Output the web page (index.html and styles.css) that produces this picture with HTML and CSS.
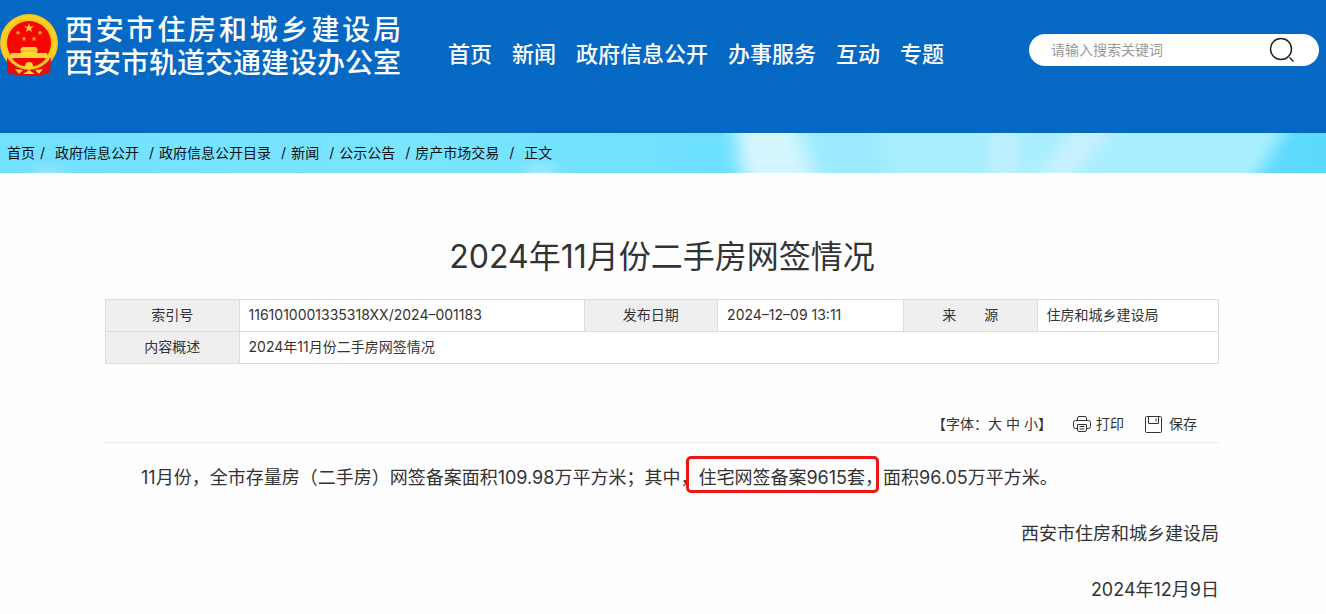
FILE: index.html
```html
<!DOCTYPE html>
<html lang="zh-CN">
<head>
<meta charset="utf-8">
<meta name="viewport" content="width=device-width, initial-scale=1">
<title>2024年11月份二手房网签情况</title>
<link rel="stylesheet" href="styles.css">
</head>
<body>
<header class="header">
  <a class="brand" href="#">
    <svg class="emblem" viewBox="0 0 58 62" aria-hidden="true">
      <path d="M8 43L7 59Q18 62 29 61Q40 62 50 59L50 43Z" fill="#e60d08"/>
      <circle cx="29" cy="29" r="29" fill="#f7c41a"/>
      <circle cx="29" cy="29" r="26" fill="none" stroke="#fbd02c" stroke-width="3"/>
      <circle cx="29" cy="29" r="22" fill="#f50600"/>
      <path d="M7 44L17 45L29 52L41 45L51 44L50 59L39 61L29 58L19 61L7 59Z" fill="#e60d08"/>
      <path d="M29 9l1.200 3.400h3.600l-2.900 2.200 1.100 3.500-3-2.100-3 2.100 1.100-3.500-2.900-2.200h3.600z" fill="#ffc93c"/>
      <path d="M18 16l.7 1.800 1.900.1-1.500 1.200.5 1.900-1.600-1.100-1.600 1.100.5-1.900-1.500-1.200 1.900-.1zM40 16l.7 1.800 1.900.1-1.500 1.200.5 1.900-1.600-1.100-1.600 1.100.5-1.900-1.500-1.200 1.900-.1zM24 22l.7 1.800 1.900.1-1.500 1.200.5 1.900-1.600-1.100-1.600 1.100.5-1.900-1.500-1.200 1.900-.1zM34 22l.7 1.800 1.900.1-1.500 1.200.5 1.900-1.600-1.100-1.600 1.100.5-1.900-1.500-1.200 1.900-.1z" fill="#f99a28"/>
      <path d="M22 33h14l2 3h-1v3h10l1 5H10l1-5h10v-3h-1z" fill="#ffd633"/>
      <path d="M20 37h18" stroke="#f0a51c" fill="none"/>
      <path d="M9 44Q17 53 25 54Q29 49 33 54Q41 53 49 44" fill="none" stroke="#f8c527" stroke-width="3"/>
      <circle cx="29" cy="52" r="4" fill="#ffd633"/>
      <path d="M15 55l8 1-4 4zM43 55l-8 1 4 4zM23 60l6-4 6 4z" fill="#ffd633"/>
    </svg>
    <span class="brand-names">
      <span class="brand-name">西安市住房和城乡建设局</span>
      <span class="brand-name">西安市轨道交通建设办公室</span>
    </span>
  </a>
  <nav class="nav">
    <a href="#">首页</a>
    <a href="#">新闻</a>
    <a href="#">政府信息公开</a>
    <a href="#">办事服务</a>
    <a href="#">互动</a>
    <a href="#">专题</a>
  </nav>
  <form class="search" role="search">
    <input class="search-input" type="text" placeholder="请输入搜索关键词" aria-label="请输入搜索关键词">
    <button class="search-button" type="button" aria-label="搜索">
      <svg width="26" height="26" viewBox="0 0 26 26" fill="none" stroke="#222" stroke-width="1.500" aria-hidden="true">
        <circle cx="12" cy="12" r="10.500"/>
        <path d="M20.500 20.500l4 4"/>
      </svg>
    </button>
  </form>
</header>

<nav class="crumbs" aria-label="当前位置">
  <svg class="crumbs-art" viewBox="0 0 1326 40" preserveAspectRatio="none" aria-hidden="true">
    <defs>
      <filter id="soft" x="-20%" y="-50%" width="140%" height="200%"><feGaussianBlur stdDeviation="9 4"/></filter>
      <linearGradient id="base">
        <stop offset="0" stop-color="#72e0ff"/>
        <stop offset=".3" stop-color="#7ae5ff"/>
        <stop offset=".54" stop-color="#6ee0ff"/>
        <stop offset="1" stop-color="#5cdafe"/>
      </linearGradient>
    </defs>
    <rect width="1326" height="40" fill="url(#base)"/>
    <g filter="url(#soft)">
      <path d="M735 -12H1290L1275 15L1250 55H745L738 30Z" fill="#a8eeff"/>
      <path d="M730 -20H790L815 60H750Z" fill="#d6f6ff"/>
      <path d="M800 -20H870L895 60H830Z" fill="#9beaff"/>
      <path d="M990 -20H1018L1018 60H990Z" fill="#c0f0ff"/>
      <path d="M1085 -20H1125L1060 60H1025Z" fill="#c8f1ff"/>
      <path d="M40 32L58 36L70 50H35Z" fill="#a0e8ff"/>
      <path d="M530 34L545 28L560 50H520Z" fill="#a0eaff"/>
    </g>
  </svg>
  <ol class="crumb-list">
    <li><a href="#">首页</a><span>/</span></li>
    <li><a href="#">政府信息公开</a></li>
    <li><span>/</span><a href="#">政府信息公开目录</a></li>
    <li><span>/</span><a href="#">新闻</a></li>
    <li><span>/</span><a href="#">公示公告</a></li>
    <li><span>/</span><a href="#">房产市场交易</a></li>
    <li><span>/</span></li>
    <li>正文</li>
  </ol>
</nav>

<main class="article">
  <h1 class="title">2024年11月份二手房网签情况</h1>
  <table class="meta">
    <colgroup>
      <col class="col-label"><col class="col-index"><col class="col-label"><col class="col-date"><col class="col-label"><col>
    </colgroup>
    <tr>
      <th scope="row">索引号</th><td>1161010001335318XX/2024–001183</td>
      <th scope="row">发布日期</th><td>2024–12–09 13:11</td>
      <th scope="row">来&emsp;&emsp;源</th><td>住房和城乡建设局</td>
    </tr>
    <tr>
      <th scope="row">内容概述</th><td colspan="5">2024年11月份二手房网签情况</td>
    </tr>
  </table>
  <div class="tools">
    <div class="sizes"><span>【字体：</span><button type="button">大</button><button type="button">中</button><button type="button">小</button><span>】</span></div>
    <button class="tool" type="button">
      <svg width="18" height="16" viewBox="0 0 18 16" fill="none" stroke="#333" aria-hidden="true">
        <path d="M4.500 4V2a1.500 1.500 0 0 1 1.500-1.500h6A1.500 1.500 0 0 1 13.500 2v2M4 12.500H2.500a2 2 0 0 1-2-2V6.500a2 2 0 0 1 2-2h13a2 2 0 0 1 2 2v4a2 2 0 0 1-2 2H14M4.500 8.500h9v5.500a1.500 1.500 0 0 1-1.500 1.500H6A1.500 1.500 0 0 1 4.500 14zM6.500 10.500h5M6.500 13h5"/>
      </svg>打印
    </button>
    <button class="tool save" type="button">
      <svg width="17" height="17" viewBox="0 0 17 17" fill="none" stroke="#333" aria-hidden="true">
        <path d="M1.500.5h14a1 1 0 0 1 1 1v14a1 1 0 0 1-1 1h-14a1 1 0 0 1-1-1v-14a1 1 0 0 1 1-1zM3.500.5v7h10v-7M11 2.500v3"/>
      </svg>保存
    </button>
  </div>
  <div class="content">
    <p class="body-text">11月份，全市存量房（二手房）网签备案面积109.98万平方米；其中，<span class="marked">住宅网签备案9615套，</span>面积96.05万平方米。</p>
    <p class="sign">西安市住房和城乡建设局</p>
    <p class="sign">2024年12月9日</p>
  </div>
</main>
</body>
</html>
```

FILE: styles.css
```css
* {
  box-sizing: border-box;
}

body {
  margin: 0;
  background: #fefefe;
  color: #333;
  font-family: Inter, "Noto Sans CJK SC", sans-serif;
  font-size: 14px;
  line-height: 20px;
}

a {
  color: inherit;
  text-decoration: none;
}

button,
input {
  padding: 0;
  border: 0;
  background: none;
  color: inherit;
  font: inherit;
}

.header {
  display: flex;
  align-items: flex-start;
  min-height: 133px;
  padding: 14px 7px 0 0;
  background: #0568c3;
  color: #fff;
}

.brand {
  display: flex;
  gap: 7px;
  flex: none;
}

.emblem {
  width: 58px;
  height: 62px;
}

.brand-names {
  display: flex;
  flex-direction: column;
  font-size: 28px;
  font-weight: 500;
  line-height: 33px;
}

.brand-name {
  text-align: justify;
  text-align-last: justify;
  white-space: nowrap;
}

.nav {
  display: flex;
  flex: none;
  gap: 20px;
  margin: 24px 0 0 47px;
  font-size: 22px;
  font-weight: 500;
  line-height: 32px;
}

.search {
  display: flex;
  align-items: center;
  width: 290px;
  height: 32px;
  margin: 20px 0 0 auto;
  padding: 0 24px 0 22px;
  border-radius: 16px;
  background: #fff;
}

.search-input {
  flex: 1;
  min-width: 0;
  outline: none;
  color: #333;
}

.search-input::placeholder {
  color: #999;
  opacity: 1;
}

.search-button {
  display: flex;
  cursor: pointer;
}

.crumbs {
  position: relative;
  min-height: 40px;
  background: #72e0ff;
  color: #111;
}

.crumbs-art {
  position: absolute;
  inset: 0;
  width: 100%;
  height: 100%;
}

.crumb-list {
  position: relative;
  display: flex;
  gap: 10px;
  margin: 0;
  padding: 10px 7px;
  list-style: none;
}

.crumb-list li {
  display: flex;
  gap: 5px;
}

.article {
  padding: 60px 107px 0 105px;
}

.title {
  margin: 0 0 18px;
  font-size: 32px;
  font-weight: 400;
  line-height: 48px;
  text-align: center;
}

.meta {
  width: 100%;
  border-collapse: collapse;
  table-layout: fixed;
}

.col-label {
  width: 12%;
}

.col-index {
  width: 31%;
}

.col-date {
  width: 16.7%;
}

.meta th,
.meta td {
  height: 32px;
  padding: 0 9px 2px;
  border: 1px solid #dcdcdc;
  font-weight: 400;
}

.meta th {
  background: #efefef;
  text-align: center;
}

.meta td {
  background: #fff;
  text-align: left;
}

.tools {
  display: flex;
  align-items: center;
  justify-content: flex-end;
  margin-top: 48px;
  padding: 2px 22px 8px 0;
  border-bottom: 1px solid #ebebeb;
}

.sizes {
  display: flex;
  gap: 4px;
}

.sizes span:first-child {
  margin-right: -4px;
}

.sizes span:last-child {
  margin-left: -4px;
}

.tool {
  display: flex;
  align-items: center;
  gap: 5px;
  margin-left: 21px;
}

.tool.save {
  gap: 7px;
}

.content {
  padding-top: 17px;
  font-size: 18px;
  line-height: 36px;
}

.content p {
  margin: 0 0 20px;
}

.body-text {
  text-indent: 2em;
}

.marked {
  position: relative;
}

.marked::after {
  content: "";
  position: absolute;
  inset: -11px 4px -5px -12px;
  border: 3px solid #ee1515;
  border-radius: 5px;
}

.sign {
  text-align: right;
}
```
